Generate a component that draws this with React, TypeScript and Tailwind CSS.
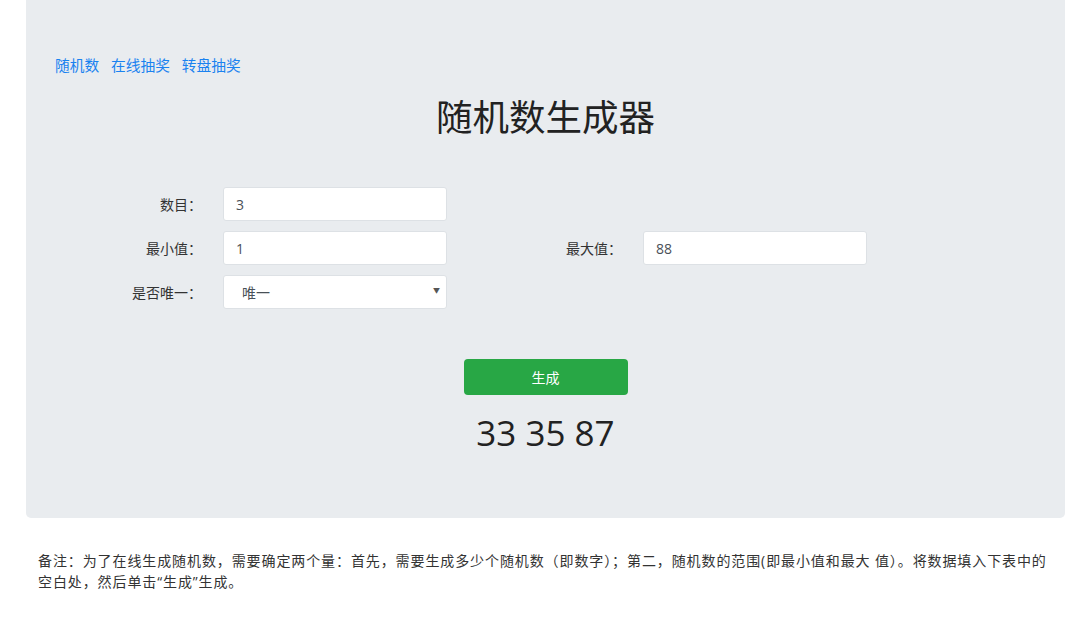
import React from 'react';

const font = { fontFamily: '"Open Sans", "Noto Sans CJK SC", sans-serif' };

function Field({ label, value, labelWidth }: { label: string; value: string; labelWidth: string }) {
  return (
    <div className="flex items-center">
      <label className={`${labelWidth} text-right text-[14px] text-[#333]`}>{label}</label>
      <input
        readOnly
        value={value}
        className="ml-[21px] h-[34px] w-[224px] rounded-[3px] border border-[#dde1e5] bg-white px-[12px] text-[14px] text-[#495057] outline-none"
      />
    </div>
  );
}

export default function App() {
  return (
    <div className="min-h-screen bg-white" style={font}>
      {/* Jumbotron */}
      <div className="ml-[26px] mr-[15px] rounded-b-[5px] bg-[#e9ecef] pb-[64px] pt-[55px]">
        <nav className="flex gap-[12px] px-[29px] text-[14.7px] leading-[21px] text-[#1a82f0]">
          <a href="#">随机数</a>
          <a href="#">在线抽奖</a>
          <a href="#">转盘抽奖</a>
        </nav>

        <h1 className="mt-[20px] text-center text-[36.5px] leading-[43px] text-[#222]">随机数生成器</h1>

        {/* Form */}
        <div className="mt-[48px] flex flex-col gap-[10px] px-[29px]">
          <Field label="数目：" value="3" labelWidth="w-[147px]" />
          <div className="flex items-center">
            <Field label="最小值：" value="1" labelWidth="w-[147px]" />
            <Field label="最大值：" value="88" labelWidth="w-[175px]" />
          </div>
          <div className="flex items-center">
            <label className="w-[147px] text-right text-[14px] text-[#333]">是否唯一：</label>
            <div className="relative ml-[21px] h-[34px] w-[224px]">
              <select
                defaultValue="1"
                className="h-full w-full appearance-none rounded-[3px] border border-[#dde1e5] bg-white pl-[18px] text-[14px] text-[#495057] outline-none"
              >
                <option value="1">唯一</option>
                <option value="0">不唯一</option>
              </select>
              <span className="pointer-events-none absolute right-[7px] top-[11px] text-[7px] leading-[10px] text-[#555]">▼</span>
            </div>
          </div>
        </div>

        <div className="mt-[50px] flex justify-center">
          <button className="h-[36px] w-[164px] rounded-[4px] bg-[#28a745] text-[14px] text-white">生成</button>
        </div>

        <div className="mt-[17px] text-center text-[35px] leading-[42px] text-[#222]">33 35 87</div>
      </div>

      {/* Note */}
      <p className="ml-[38px] mt-[32px] w-[1012px] text-[14px] leading-[21px] tracking-[0.9px] text-[#333]">
        备注：为了在线生成随机数，需要确定两个量：首先，需要生成多少个随机数（即数字）；第二，随机数的范围(即最小值和最大 值）。将数据填入下表中的空白处，然后单击“生成”生成。
      </p>
    </div>
  );
}
